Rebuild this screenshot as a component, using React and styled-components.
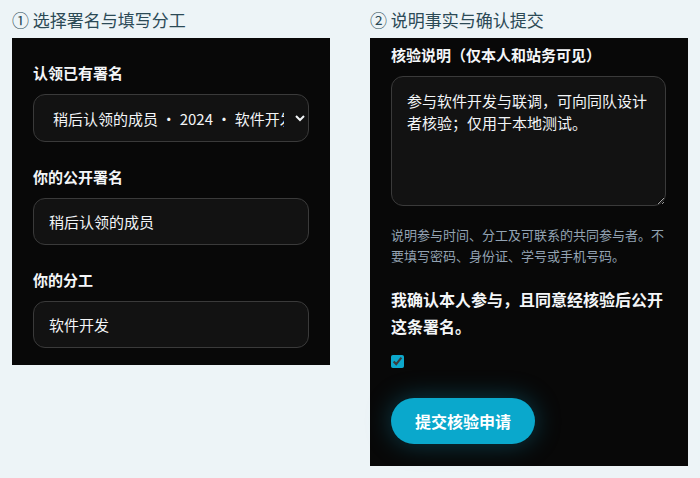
import React from "react";
import styled, { createGlobalStyle } from "styled-components";

const GlobalStyle = createGlobalStyle`
  body {
    margin: 0;
    background: #edf4f7;
    font-family: "Noto Sans CJK SC", "Noto Sans", sans-serif;
  }
`;

const Page = styled.div`
  display: grid;
  grid-template-columns: 318px 318px;
  column-gap: 40px;
  align-items: start;
  padding: 8px 12px;
`;

const Step = styled.section`
  display: flex;
  flex-direction: column;
`;

const StepTitle = styled.h2`
  margin: 0 0 6px;
  font-size: 17px;
  line-height: 24px;
  font-weight: 400;
  color: #2c4a56;
`;

const Panel = styled.div`
  display: flex;
  flex-direction: column;
  background: #080808;
  color: #f2f5f7;
  padding: ${(p) => p.$pad};
`;

const Field = styled.div`
  display: flex;
  flex-direction: column;
  gap: 10px;
  margin-bottom: ${(p) => p.$after || 0}px;
`;

const Label = styled.label`
  font-size: 15px;
  line-height: 22px;
  font-weight: 700;
  color: #f4f6f8;
`;

const controlBase = `
  box-sizing: border-box;
  width: 100%;
  background: #121212;
  border: 1px solid #3a3a3a;
  border-radius: 12px;
  color: #f2f5f7;
  font-family: "Noto Sans CJK SC", "Noto Sans", sans-serif;
  font-size: 15px;
  color-scheme: dark;
  outline: none;
`;

const Select = styled.select`
  ${controlBase}
  height: 48px;
  padding: 0 8px 0 15px;
`;

const Input = styled.input`
  ${controlBase}
  height: 47px;
  padding: 0 15px;
`;

const TextArea = styled.textarea`
  ${controlBase}
  display: block;
  height: 130px;
  padding: 13px 15px;
  line-height: 22px;
`;

const Hint = styled.p`
  margin: 18px 0 0;
  font-size: 13px;
  line-height: 21px;
  color: #93a3b3;
`;

const Consent = styled.p`
  margin: 20px 0 0;
  font-size: 16px;
  line-height: 27px;
  font-weight: 700;
  color: #f4f6f8;
`;

const Check = styled.input`
  width: 13px;
  height: 13px;
  margin: 15px 0 0;
  accent-color: #0ca8cc;
`;

const Submit = styled.button`
  align-self: flex-start;
  margin-top: 30px;
  height: 46px;
  padding: 0 24px;
  border: none;
  border-radius: 23px;
  background: #0aa8cc;
  color: #ffffff;
  font-family: "Noto Sans CJK SC", "Noto Sans", sans-serif;
  font-size: 16px;
  font-weight: 700;
  box-shadow: 0 0 26px rgba(14, 160, 200, 0.35);
  cursor: pointer;
`;

export default function App() {
  return (
    <>
      <GlobalStyle />
      <Page>
        <Step>
          <StepTitle>① 选择署名与填写分工</StepTitle>
          <Panel $pad="24px 21px 17px">
            <Field $after={24}>
              <Label>认领已有署名</Label>
              <Select defaultValue="pending">
                <option value="pending">稍后认领的成员 · 2024 · 软件开发</option>
              </Select>
            </Field>
            <Field $after={24}>
              <Label>你的公开署名</Label>
              <Input defaultValue="稍后认领的成员" />
            </Field>
            <Field>
              <Label>你的分工</Label>
              <Input defaultValue="软件开发" />
            </Field>
          </Panel>
        </Step>

        <Step>
          <StepTitle>② 说明事实与确认提交</StepTitle>
          <Panel $pad="6px 22px 22px 21px">
            <Field>
              <Label>核验说明（仅本人和站务可见）</Label>
              <TextArea defaultValue="参与软件开发与联调，可向同队设计者核验；仅用于本地测试。" />
            </Field>
            <Hint>
              说明参与时间、分工及可联系的共同参与者。不要填写密码、身份证、学号或手机号码。
            </Hint>
            <Consent>我确认本人参与，且同意经核验后公开这条署名。</Consent>
            <Check type="checkbox" defaultChecked />
            <Submit type="button">提交核验申请</Submit>
          </Panel>
        </Step>
      </Page>
    </>
  );
}
